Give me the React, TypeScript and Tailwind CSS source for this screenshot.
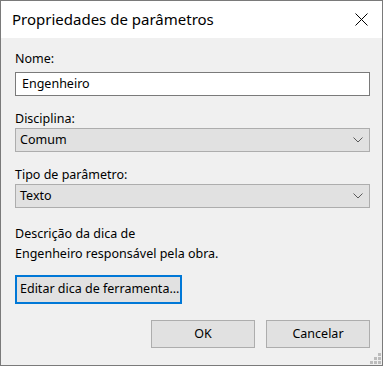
import React from 'react';

const font = { fontFamily: '"Noto Sans", "Open Sans", sans-serif' };

const Chevron = () => (
  <svg width="10" height="6" viewBox="0 0 10 6" className="text-[#5a5a5a]">
    <path d="M0.5 0.5 L5 5 L9.5 0.5" fill="none" stroke="currentColor" strokeWidth="1" />
  </svg>
);

const Select = ({ value }: { value: string }) => (
  <div className="flex h-[24px] w-[355px] items-center justify-between border border-[#adadad] bg-[#e1e1e1] pl-[4px] pr-[6px] text-[12.5px] text-black">
    <span>{value}</span>
    <Chevron />
  </div>
);

export default function App() {
  return (
    <div className="h-[367px] w-[384px] bg-white" style={font}>
      <div className="flex h-[366px] w-[383px] flex-col border border-[#7a7a7a] bg-[#f0f0f0]">
        {/* title bar */}
        <div className="flex h-[37px] shrink-0 items-center justify-between bg-white pl-[11px] pr-[14px]">
          <span className="text-[15px] text-black">Propriedades de parâmetros</span>
          <svg width="13" height="13" viewBox="0 0 13 13">
            <path d="M0.5 0.5 L12.5 12.5 M12.5 0.5 L0.5 12.5" stroke="#000" strokeWidth="1" />
          </svg>
        </div>

        <div className="flex flex-1 flex-col pl-[14px] text-[12.5px] text-black">
          <div className="mt-[13px] leading-[16px]">Nome:</div>
          <div className="mt-[5px] flex h-[24px] w-[355px] items-center border border-[#7a7a7a] bg-white pl-[6px]">
            Engenheiro
          </div>

          <div className="mt-[15px] leading-[16px]">Disciplina:</div>
          <div className="mt-[1px]">
            <Select value="Comum" />
          </div>

          <div className="mt-[15px] leading-[16px]">Tipo de parâmetro:</div>
          <div className="mt-[1px]">
            <Select value="Texto" />
          </div>

          <div className="mt-[16px] leading-[20px]">
            <div>Descrição da dica de</div>
            <div>Engenheiro responsável pela obra.</div>
          </div>

          <button className="mt-[11px] flex h-[29px] w-[167px] items-center border-2 border-[#0078d7] bg-[#e1e1e1] pl-[3px] text-[12.5px]">
            Editar dica de ferramenta...
          </button>

          <div className="mt-[16px] flex gap-[11px] self-end pr-[12px]">
            <button className="h-[28px] w-[104px] border border-[#adadad] bg-[#e1e1e1] text-[12.5px]">OK</button>
            <button className="h-[28px] w-[104px] border border-[#adadad] bg-[#e1e1e1] text-[12.5px]">Cancelar</button>
          </div>

          <div className="mt-auto flex justify-end pb-[1px] pr-[1px]">
            <svg width="11" height="11" viewBox="0 0 11 11">
              <rect x="8" y="0" width="3" height="3" fill="#bcbcbc" />
              <rect x="4" y="4" width="3" height="3" fill="#bcbcbc" />
              <rect x="8" y="4" width="3" height="3" fill="#bcbcbc" />
              <rect x="0" y="8" width="3" height="3" fill="#bcbcbc" />
              <rect x="4" y="8" width="3" height="3" fill="#bcbcbc" />
              <rect x="8" y="8" width="3" height="3" fill="#bcbcbc" />
            </svg>
          </div>
        </div>
      </div>
    </div>
  );
}
